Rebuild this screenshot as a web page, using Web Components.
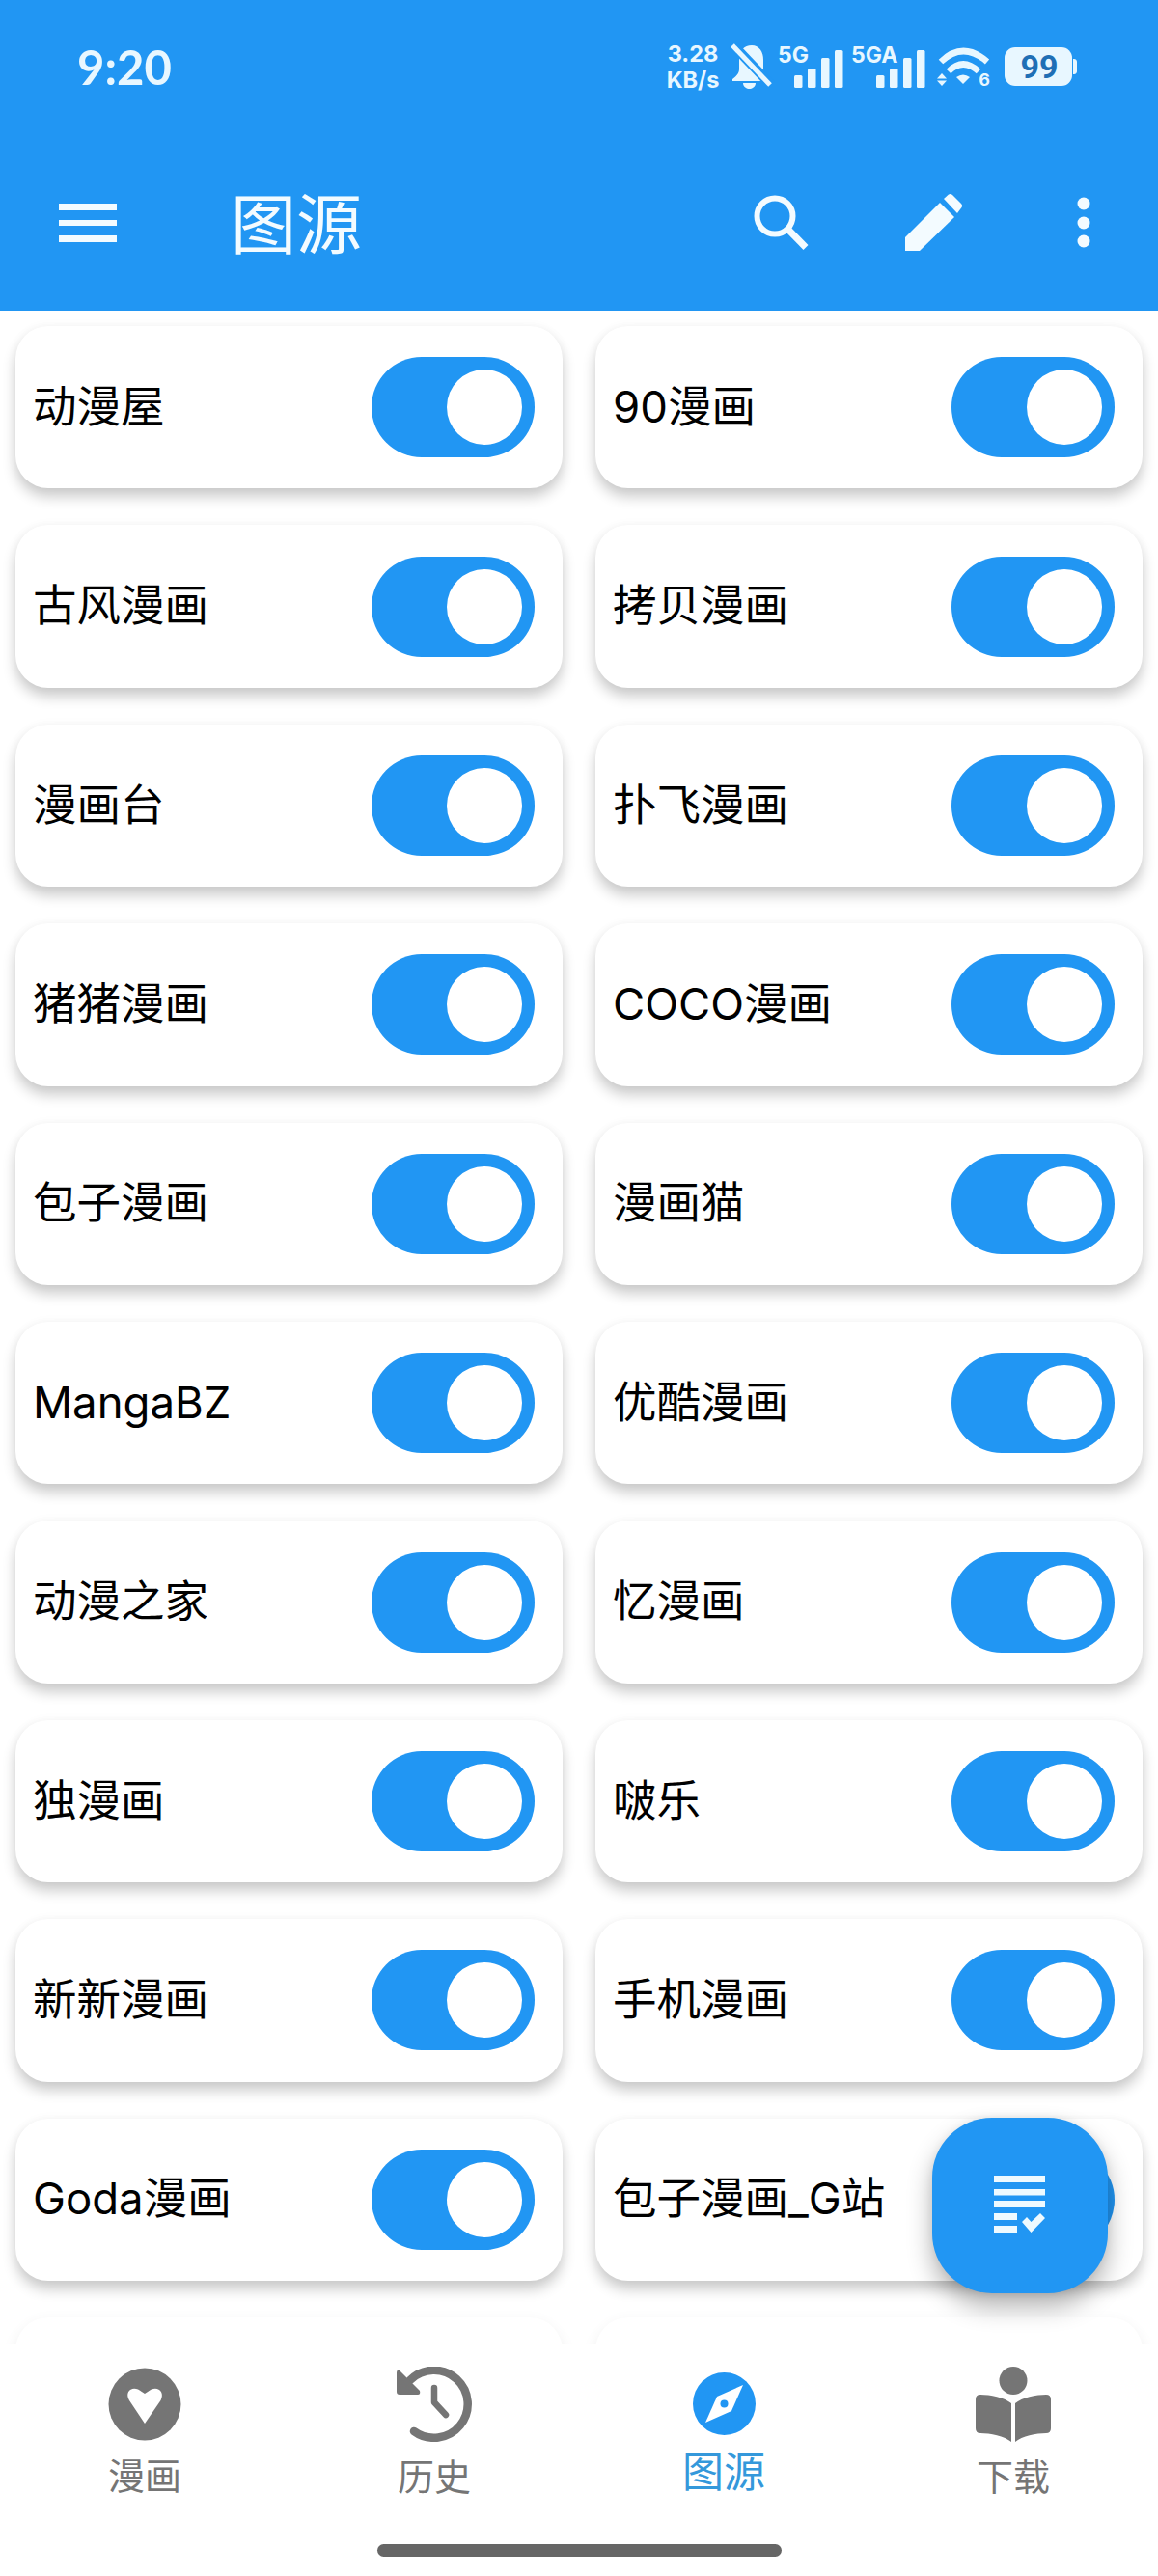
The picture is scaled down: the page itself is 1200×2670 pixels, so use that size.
<!DOCTYPE html>
<html lang="zh">
<head>
<meta charset="utf-8">
<title>图源</title>
<style>
  html,body{ margin:0; padding:0; background:#fff; }
  body{ font-family:"Inter","Noto Sans CJK SC",sans-serif; }
</style>
</head>
<body>
<app-screen>
  <status-bar slot="top"></status-bar>
  <app-toolbar slot="top">图源</app-toolbar>

  <source-grid>
    <source-card>动漫屋</source-card>
    <source-card>90漫画</source-card>
    <source-card>古风漫画</source-card>
    <source-card>拷贝漫画</source-card>
    <source-card>漫画台</source-card>
    <source-card>扑飞漫画</source-card>
    <source-card>猪猪漫画</source-card>
    <source-card>COCO漫画</source-card>
    <source-card>包子漫画</source-card>
    <source-card>漫画猫</source-card>
    <source-card>MangaBZ</source-card>
    <source-card>优酷漫画</source-card>
    <source-card>动漫之家</source-card>
    <source-card>忆漫画</source-card>
    <source-card>独漫画</source-card>
    <source-card>啵乐</source-card>
    <source-card>新新漫画</source-card>
    <source-card>手机漫画</source-card>
    <source-card>Goda漫画</source-card>
    <source-card>包子漫画_G站</source-card>
    <source-card empty></source-card>
    <source-card empty></source-card>
  </source-grid>

  <fab-button slot="fab"></fab-button>

  <bottom-nav slot="bottom">
    <nav-item label="漫画" icon="heart"></nav-item>
    <nav-item label="历史" icon="history"></nav-item>
    <nav-item label="图源" icon="compass" active></nav-item>
    <nav-item label="下载" icon="book"></nav-item>
  </bottom-nav>
</app-screen>

<script>
const BLUE = '#2196f3';

class AppScreen extends HTMLElement{
  constructor(){
    super();
    this.attachShadow({mode:'open'});
    this.shadowRoot.innerHTML = `
      <style>
        :host{ display:flex; flex-direction:column; position:relative; width:1200px; height:2670px; overflow:hidden; background:#fff }
        .top{ flex:none; background:${BLUE}; color:#f0faff }
        .main{ flex:1; min-height:0; overflow:hidden }
        .bottom{ flex:none; position:relative; z-index:1; background:#fff }
        .fab{ position:absolute; left:966px; top:2195px; z-index:2 }
      </style>
      <div class="top"><slot name="top"></slot></div>
      <div class="main"><slot></slot></div>
      <div class="bottom"><slot name="bottom"></slot></div>
      <div class="fab"><slot name="fab"></slot></div>
    `;
  }
}
customElements.define('app-screen', AppScreen);

class StatusBar extends HTMLElement{
  constructor(){
    super();
    this.attachShadow({mode:'open'});
    const bars = `
      <rect x="0" y="26" width="8.5" height="13" rx="1.5"/>
      <rect x="14" y="19" width="8.5" height="20" rx="1.5"/>
      <rect x="28" y="8" width="8.5" height="31" rx="1.5"/>
      <rect x="42" y="0" width="8.5" height="39" rx="1.5"/>`;
    this.shadowRoot.innerHTML = `
      <style>
        :host{ display:flex; align-items:center; height:140px; padding:0 84px 0 80px; box-sizing:border-box; color:#e8f7ff }
        .time{ font:700 49px/1 "Lato","Noto Sans",sans-serif; margin-top:-2px }
        .icons{ margin-left:auto; display:flex; align-items:center; height:50px; margin-top:-3px }
        .speed{ width:56px; font:700 23.5px/27px "Inter",sans-serif; text-align:center }
        .speed div{ white-space:nowrap }
        svg{ display:block; fill:currentColor; overflow:visible; flex:none }
        svg text{ font-family:"Inter",sans-serif; font-weight:700 }
        .bell{ margin-left:12px }
        .sig1{ margin-left:7px }
        .sig2{ margin-left:9px }
        .wifi{ margin-left:12px }
        .batt{ margin-left:14px }
      </style>
      <div class="time">9:20</div>
      <div class="icons">
        <div class="speed"><div>3.28</div><div>KB/s</div></div>
        <svg class="bell" width="41" height="46" viewBox="0 0 41 46">
          <path d="M21 1C29 1 33 8 33 16V26C33 30 36 33 39 36V38H1V36C5 33 8 30 8 26V15C8 7 13 1 21 1Z"/>
          <path d="M12 40H25C25 44 21 46 18.500 46C16 46 12 44 12 40Z"/>
          <path d="M1 0L41 42" stroke="${BLUE}" stroke-width="10" fill="none"/>
          <path d="M1 1L40 42" stroke="currentColor" stroke-width="5" fill="none"/>
        </svg>
        <svg class="sig1" width="67" height="46" viewBox="0 0 67 46">
          <g transform="translate(17,6)">${bars}</g>
          <text x="0" y="19" font-size="23">5G</text>
        </svg>
        <svg class="sig2" width="77" height="46" viewBox="0 0 77 46">
          <g transform="translate(26,6)">${bars}</g>
          <text x="0" y="19" font-size="23">5GA</text>
        </svg>
        <svg class="wifi" width="56" height="40" viewBox="0 0 56 40">
          <path d="M4 15Q27 -7 52 15" fill="none" stroke="currentColor" stroke-width="6.500"/>
          <path d="M12 25Q27 10 43 25" fill="none" stroke="currentColor" stroke-width="6.500"/>
          <path d="M20 31Q27 26 34 31L27 38Z"/>
          <path d="M5 27L10 32.500H0Z"/>
          <path d="M0 34.500H10L5 40Z"/>
          <text x="49" y="40" font-size="18" text-anchor="middle">6</text>
        </svg>
        <svg class="batt" width="75" height="40" viewBox="0 0 75 40">
          <rect x="0" y="0" width="70" height="40" rx="11"/>
          <path d="M71 12H72C74 12 75 13.500 75 15V25C75 26.500 74 28 72 28H71Z"/>
          <text x="36" y="32" font-size="34" text-anchor="middle" style="fill:#1f6fb5;font-family:Roboto,sans-serif">99</text>
        </svg>
      </div>
    `;
  }
}
customElements.define('status-bar', StatusBar);

class AppToolbar extends HTMLElement{
  constructor(){
    super();
    this.attachShadow({mode:'open'});
    this.shadowRoot.innerHTML = `
      <style>
        :host{ display:flex; align-items:center; height:182px; padding-left:61px; box-sizing:border-box; color:#f3fbff }
        svg{ display:block; fill:currentColor; flex:none }
        .menu{ display:flex; flex-direction:column; gap:10px; width:60px }
        .menu i{ display:block; height:6.500px; background:currentColor }
        .title{ margin-left:118px; font:400 68px/1 "Noto Sans CJK SC",sans-serif; margin-top:-4px }
        .actions{ margin-left:auto; display:flex; align-items:center }
      </style>
      <div class="menu"><i></i><i></i><i></i></div>
      <div class="title"><slot></slot></div>
      <div class="actions">
        <svg width="58" height="58" viewBox="0 0 58 58" style="margin-right:99px">
          <circle cx="22" cy="22" r="18.500" fill="none" stroke="currentColor" stroke-width="6"/>
          <path d="M34 34L54 54.500" stroke="currentColor" stroke-width="7" fill="none"/>
        </svg>
        <svg width="60" height="60" viewBox="0 0 60 60" style="margin-right:118px">
          <path d="M0 45L36 9L51 24L15 59H0Z"/>
          <path d="M40 5L45 0.500Q47 -.5 49 1L58 10Q60 12 58.500 14L54 20Z"/>
        </svg>
        <svg width="14" height="60" viewBox="0 0 14 60" style="margin-right:70px">
          <circle cx="7" cy="10" r="6.500"/><circle cx="7" cy="30" r="6.500"/><circle cx="7" cy="49" r="6.500"/>
        </svg>
      </div>
    `;
  }
}
customElements.define('app-toolbar', AppToolbar);

class SourceGrid extends HTMLElement{
  constructor(){
    super();
    this.attachShadow({mode:'open'});
    this.shadowRoot.innerHTML = `
      <style>
        :host{ display:grid; grid-template-columns:567px 567px; grid-auto-rows:168.400px; column-gap:34px; row-gap:38px; padding:16px 16px 0 }
      </style>
      <slot></slot>
    `;
  }
}
customElements.define('source-grid', SourceGrid);

class SourceToggle extends HTMLElement{
  constructor(){
    super();
    this.attachShadow({mode:'open'});
    this.shadowRoot.innerHTML = `
      <style>
        :host{ display:flex; align-items:center; justify-content:flex-end; width:169px; height:104px; padding-right:13px; box-sizing:border-box; border-radius:52px; background:${BLUE} }
        .thumb{ width:78px; height:78px; border-radius:50%; background:#fff }
      </style>
      <div class="thumb"></div>
    `;
  }
}
customElements.define('source-toggle', SourceToggle);

class SourceCard extends HTMLElement{
  constructor(){
    super();
    this.attachShadow({mode:'open'});
  }
  connectedCallback(){
    const empty = this.hasAttribute('empty');
    this.shadowRoot.innerHTML = `
      <style>
        :host{ display:flex; align-items:center; justify-content:space-between; padding:0 29px 0 18px; box-sizing:border-box; background:#fff; border-radius:34px;
          box-shadow:0 9px 14px rgba(0,0,0,.2), 0 0 12px rgba(0,0,0,.035); color:#000;
          font:400 45.5px/1.2 "Inter","Noto Sans CJK SC",sans-serif; white-space:nowrap; ${empty?'opacity:.35;':''} }
      </style>
      <div><slot></slot></div>
      ${empty ? '' : '<source-toggle></source-toggle>'}
    `;
  }
}
customElements.define('source-card', SourceCard);

class FabButton extends HTMLElement{
  constructor(){
    super();
    this.attachShadow({mode:'open'});
    this.shadowRoot.innerHTML = `
      <style>
        :host{ display:flex; align-items:center; justify-content:center; width:182px; height:182px; border-radius:62px; background:${BLUE}; box-shadow:0 14px 26px rgba(0,0,0,.3), 0 0 8px rgba(0,0,0,.06) }
        svg{ display:block; fill:#eefaff; margin-top:-2px }
      </style>
      <svg width="54" height="60" viewBox="0 0 54 60">
        <rect x="0" y="0" width="53" height="7"/>
        <rect x="0" y="14" width="53" height="6.500"/>
        <rect x="0" y="26" width="53" height="7"/>
        <rect x="0" y="39" width="24" height="7"/>
        <rect x="0" y="52" width="24" height="7"/>
        <path d="M29 48L34 43L38.500 48L48 39L53 44L38.500 59Z"/>
      </svg>
    `;
  }
}
customElements.define('fab-button', FabButton);

class BottomNav extends HTMLElement{
  constructor(){
    super();
    this.attachShadow({mode:'open'});
    this.shadowRoot.innerHTML = `
      <style>
        :host{ display:block; height:240px; background:#fff }
        .row{ display:grid; grid-template-columns:repeat(4,300px); height:184px; padding-top:23px; box-sizing:border-box }
        .bar{ width:419px; height:13px; margin:23px auto 0; border-radius:7px; background:#666 }
      </style>
      <div class="row"><slot></slot></div>
      <div class="bar"></div>
    `;
  }
}
customElements.define('bottom-nav', BottomNav);

const NAV_ICONS = {
  heart:`<svg width="76" height="76" viewBox="0 0 76 76" style="margin-top:1px">
      <circle cx="38" cy="38" r="37.500"/>
      <path fill="#fff" d="M38 58L22 34C17 25 24 19.500 31 22.500C34 24 36 26 38 27C40 26 42 24 45 22.500C52 19.500 59 25 54.500 34Z"/>
    </svg>`,
  history:`<svg width="78" height="78" viewBox="0 0 78 78">
      <path d="M18 67A35 35 0 1 0 14 14" fill="none" stroke="currentColor" stroke-width="8.500" stroke-linecap="round"/>
      <path d="M0 6Q0 3 3 4L24 25Q25 29 22 29H3Q0 29 0 26Z"/>
      <path d="M39 22V37L51 50" fill="none" stroke="currentColor" stroke-width="6.500" stroke-linecap="round" stroke-linejoin="round"/>
    </svg>`,
  compass:`<svg width="65" height="65" viewBox="0 0 65 65" style="margin-top:6px">
      <circle cx="32.500" cy="32.500" r="32.500"/>
      <path fill="#fff" d="M52 13L40 40L13 52L25 25Z"/>
      <circle cx="32.500" cy="32.500" r="4"/>
    </svg>`,
  book:`<svg width="78" height="78" viewBox="0 0 78 78">
      <circle cx="39" cy="14.500" r="14.500"/>
      <path d="M5 29C15 29 30 32 37 38V78C30 72 15 69 5 69Q0 69 0 64V34Q0 29 5 29Z"/>
      <path d="M73 29C63 29 48 32 41 38V78C48 72 63 69 73 69Q78 69 78 64V34Q78 29 73 29Z"/>
    </svg>`
};

class NavItem extends HTMLElement{
  constructor(){
    super();
    this.attachShadow({mode:'open'});
  }
  connectedCallback(){
    const active = this.hasAttribute('active');
    this.shadowRoot.innerHTML = `
      <style>
        :host{ display:flex; flex-direction:column; align-items:center; color:${active?BLUE:'#757575'} }
        svg{ display:block; fill:currentColor; flex:none }
        .label{ font:400 ${active?43:38}px/1 "Noto Sans CJK SC",sans-serif; margin-top:${active?14:15}px; ${active?'color:#3498db':''} }
      </style>
      ${NAV_ICONS[this.getAttribute('icon')]||''}
      <div class="label">${this.getAttribute('label')||''}</div>
    `;
  }
}
customElements.define('nav-item', NavItem);
</script>
</body>
</html>
